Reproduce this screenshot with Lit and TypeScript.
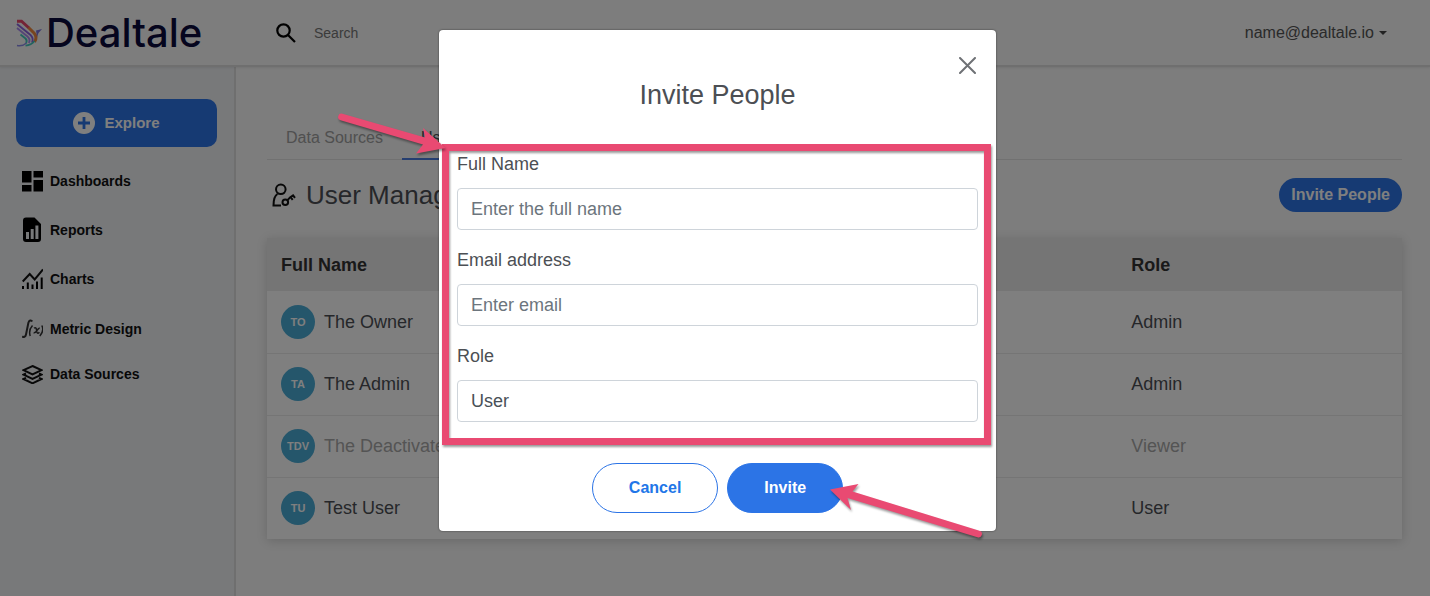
import { LitElement, html, svg, css } from "lit";
import { customElement, property } from "lit/decorators.js";

interface Person {
  initials: string;
  name: string;
  role: string;
  inactive?: boolean;
}

const people: Person[] = [
  { initials: "TO", name: "The Owner", role: "Admin" },
  { initials: "TA", name: "The Admin", role: "Admin" },
  { initials: "TDV", name: "The Deactivated", role: "Viewer", inactive: true },
  { initials: "TU", name: "Test User", role: "User" },
];

const navItems = [
  {
    label: "Dashboards",
    icon: html`<svg width="21" height="28" viewBox="0 0 21 28">
      <path d="M0 4h9.500v11.500H0zM0 18h9.500v6.500H0zM11.500 4H21v6.500h-9.500zM11.500 13H21v11.500h-9.500z" />
    </svg>`,
  },
  {
    label: "Reports",
    icon: html`<svg width="21" height="29" viewBox="0 0 21 29">
      <path d="M4 2.500h8.500l6.500 6.500v15a3 3 0 0 1-3 3H4a3 3 0 0 1-3-3v-18.500a3 3 0 0 1 3-3z" />
      <path class="cut" d="M4 17h3v7H4zM8.700 14h3v10h-3zM13.400 10.500h3V24h-3z" />
    </svg>`,
  },
  {
    label: "Charts",
    icon: html`<svg width="21" height="30" viewBox="0 0 21 30">
      <path class="line" d="M.7 17.500l7-7.500 5 5.500L21 5.500" />
      <path d="M0 22h2v3H0zM4.800 18.500h2V25h-2zM9.500 20.500h2V25h-2zM14 17.500h2V25h-2zM18.700 13.500h2V25h-2z" />
    </svg>`,
  },
  {
    label: "Metric Design",
    icon: html`<svg width="21" height="30" viewBox="0 0 21 30">
      <path class="hair stem" d="M10.200 7.500c-1-1.800-3.200-1.200-3.800 1.300L4 20.500c-.5 2.500-2.500 3.200-3.800 1.800" />
      <path class="hair" d="M10.500 11.500c-2.800 3-3.500 6.500-2.300 10.500M19.800 11.500c1.800 3.300.8 7.200-2 10.500M12 14.200c2.200-1.600 2.400.8 2.700 2.700.3 2.600 1.200 3 2.700 1.400M17.800 14.200c-2.300-.8-3.300 5.600-6.200 4.500" />
    </svg>`,
  },
  {
    label: "Data Sources",
    icon: html`<svg width="21" height="20" viewBox="0 0 21 20">
      <path class="line" d="M10.500 2l9 4.200-9 4.300-9-4.300zM4 9.500l-2.500 1.200 9 4.300 9-4.300L17 9.500M4 13.800L1.500 15l9 4.300 9-4.300-2.500-1.200" />
    </svg>`,
  },
];

@customElement("app-header")
class AppHeader extends LitElement {
  static styles = css`
    :host {
      display: flex;
      align-items: center;
      height: 65px;
      background: #fafafa;
      border-bottom: 2px solid #dedede;
      box-shadow: 0 1px 2px rgba(0, 0, 0, 0.08);
      padding: 0 43px 0 16px;
      position: relative;
    }
    .brand {
      display: flex;
      align-items: center;
      gap: 4px;
      flex: 0 0 260px;
      text-decoration: none;
      color: #0a0a3c;
      font: 500 40px/44px Inter, "Liberation Sans", sans-serif;
    }
    .bird {
      fill: none;
      stroke-width: 1.8;
      flex: none;
    }
    .search {
      display: flex;
      align-items: center;
      gap: 18px;
      flex: 1;
    }
    .search input {
      border: 0;
      padding: 0;
      background: transparent;
      width: 200px;
      font: 14px/20px "Liberation Sans", Arial, sans-serif;
      color: #333;
    }
    .search input::placeholder {
      color: #777;
      opacity: 1;
    }
    .account {
      display: flex;
      align-items: center;
      gap: 5px;
      border: 0;
      padding: 0;
      background: transparent;
      color: #555;
      font: 16px/20px "Liberation Sans", Arial, sans-serif;
    }
  `;

  render() {
    return html`
      <a class="brand" href="#" aria-label="Dealtale">
        <svg class="bird" width="26" height="28" viewBox="0 0 26 28">
          <path stroke="#e8486a" stroke-width="3" d="M1 2.200h4.500L13 9" />
          <path stroke="#f0883e" stroke-width="3" d="M12.500 8.500l5.500 5.500c2.500 2.700 2.500 6 .5 9" />
          <path stroke="#8b62e0" d="M1 5l13.500 11c2.500 2.300 2.800 4.600 1.500 7.500" />
          <path stroke="#a98bf0" d="M1 9l10.500 8.500c2.300 2 2.500 4.200 1.300 6.500" />
          <path stroke="#45c8be" d="M4.500 15.500l5 4c1.500 1.500 1.500 3 .5 4.500M18.500 22c-2 2.500-5 4.200-9 4.700" />
          <path stroke="#8a8ae8" stroke-width="1.500" d="M1 26.500c4 .7 7-.2 9.500-2.500" />
          <path fill="#7a72dc" d="M20 11.500l6-1.500-3.500 4-1.500 4z" />
        </svg>
        Dealtale
      </a>
      <label class="search">
        <svg width="20" height="20" viewBox="0 0 20 20" fill="none" stroke="#000" stroke-width="2.200">
          <circle cx="7.500" cy="7.500" r="6.200" />
          <path d="M12 12l7 7" />
        </svg>
        <input type="search" placeholder="Search" aria-label="Search" />
      </label>
      <button class="account" type="button">
        name@dealtale.io
        <svg width="8" height="4" viewBox="0 0 8 4"><path fill="#444" d="M0 0h8L4 4z" /></svg>
      </button>
    `;
  }
}

@customElement("app-sidebar")
class AppSidebar extends LitElement {
  static styles = css`
    :host {
      display: block;
      box-sizing: border-box;
      flex: 0 0 236px;
      padding: 32px 17px 20px 16px;
      background: #f0f2f5;
      border-right: 2px solid #dedede;
      font: bold 14px/20px "Liberation Sans", Arial, sans-serif;
    }
    .explore {
      display: flex;
      align-items: center;
      justify-content: center;
      gap: 9px;
      width: 100%;
      height: 48px;
      border: 0;
      border-radius: 10px;
      background: #2c74e6;
      color: #fff;
      font: bold 15px/20px "Liberation Sans", Arial, sans-serif;
    }
    .nav {
      display: flex;
      flex-direction: column;
      gap: 20px;
      padding: 20px 6px;
    }
    .item {
      display: flex;
      align-items: center;
      gap: 7px;
      color: #111;
      text-decoration: none;
    }
    .item .line {
      fill: none;
      stroke: #111;
      stroke-width: 2;
    }
    .item .hair {
      fill: none;
      stroke: #333;
      stroke-width: 1.5;
    }
    .item .stem {
      stroke-width: 2;
    }
    .item .cut {
      fill: #f0f2f5;
    }
  `;

  render() {
    return html`
      <button class="explore" type="button">
        <svg width="22" height="22" viewBox="0 0 22 22">
          <circle cx="11" cy="11" r="11" fill="#fff" />
          <path d="M11 5v12M5 11h12" stroke="#2c74e6" stroke-width="2.800" />
        </svg>
        Explore
      </button>
      <nav class="nav">
        ${navItems.map((n) => html`<a class="item" href="#">${n.icon}${n.label}</a>`)}
      </nav>
    `;
  }
}

@customElement("user-table")
class UserTable extends LitElement {
  @property({ attribute: false }) people: Person[] = [];

  static styles = css`
    :host {
      display: block;
      background: #fff;
      box-shadow: 0 2px 10px rgba(0, 0, 0, 0.16);
    }
    .table {
      width: 100%;
      table-layout: fixed;
      border-collapse: collapse;
      font: 18px/24px "Liberation Sans", Arial, sans-serif;
      color: #4c4f54;
    }
    .wide {
      width: 75%;
    }
    th {
      height: 53px;
      box-sizing: border-box;
      padding: 0 13px;
      text-align: left;
      background: #ebebeb;
      color: #333;
    }
    td {
      height: 62px;
      box-sizing: border-box;
      padding: 0 13px;
      border-bottom: 1px solid #ebebeb;
    }
    th:first-child,
    td:first-child {
      padding-left: 14px;
    }
    tr:last-child td {
      border-bottom: 0;
    }
    .person {
      display: flex;
      align-items: center;
      gap: 9px;
    }
    .avatar {
      display: flex;
      align-items: center;
      justify-content: center;
      width: 34px;
      height: 34px;
      border-radius: 50%;
      background: #4bacd6;
      color: #fff;
      font-size: 11px;
      font-weight: bold;
    }
    .inactive {
      color: #a9a9a9;
    }
  `;

  render() {
    return html`
      <table class="table">
        <thead>
          <tr><th class="wide" scope="col">Full Name</th><th scope="col">Role</th></tr>
        </thead>
        <tbody>
          ${this.people.map(
            (p) => html`<tr class=${p.inactive ? "inactive" : ""}>
              <td><div class="person"><span class="avatar">${p.initials}</span>${p.name}</div></td>
              <td>${p.role}</td>
            </tr>`
          )}
        </tbody>
      </table>
    `;
  }
}

@customElement("invite-dialog")
class InviteDialog extends LitElement {
  static styles = css`
    :host {
      display: block;
      position: relative;
      box-sizing: border-box;
      width: 557px;
      max-width: 100%;
      padding: 27px 18px 18px;
      border-radius: 4px;
      background: #fff;
      box-shadow: 0 0 2px rgba(0, 0, 0, 0.6);
      color: #4c4f54;
      font: 18px/24px "Liberation Sans", Arial, sans-serif;
    }
    .top {
      display: flex;
      flex-direction: column;
      gap: 5px;
      margin-bottom: 41px;
    }
    .close {
      align-self: flex-end;
      display: flex;
      margin-right: 2px;
      border: 0;
      padding: 0;
      background: transparent;
    }
    .title {
      margin: 0;
      text-align: center;
      font-size: 27px;
      line-height: 32px;
      font-weight: normal;
    }
    .fields {
      position: relative;
      display: grid;
      gap: 18px;
    }
    .field {
      display: grid;
      gap: 12px;
    }
    .control {
      appearance: none;
      box-sizing: border-box;
      width: 100%;
      height: 42px;
      border: 1px solid #ced4da;
      border-radius: 4px;
      padding: 0 13px;
      background: #fff;
      color: #495057;
      font: inherit;
    }
    .control::placeholder {
      color: #6c757d;
      opacity: 1;
    }
    .marker {
      position: absolute;
      inset: -8px -13px -23px -15px;
      border: 7px solid #e94a72;
      filter: drop-shadow(1px 2px 1px rgba(0, 0, 0, 0.4));
      pointer-events: none;
    }
    .actions {
      display: flex;
      justify-content: center;
      gap: 9px;
      margin-top: 41px;
    }
    .action {
      box-sizing: border-box;
      height: 50px;
      border: 1px solid #2c74e6;
      border-radius: 25px;
      padding: 0 36px;
      background: #fff;
      color: #2176e8;
      font: bold 16px/20px "Liberation Sans", Arial, sans-serif;
    }
    .primary {
      background: #2c74e6;
      color: #fff;
    }
    .arrows {
      position: absolute;
      top: 0;
      left: 0;
      overflow: visible;
      pointer-events: none;
      fill: #e94a72;
      filter: drop-shadow(1px 2px 1px rgba(0, 0, 0, 0.4));
    }
  `;

  render() {
    return html`
      <div class="top">
        <button class="close" type="button" aria-label="Close">
          <svg width="17" height="17" viewBox="0 0 17 17" stroke="#6e7175" stroke-width="2" stroke-linecap="round">
            <path d="M1 1l15 15M16 1L1 16" />
          </svg>
        </button>
        <h2 class="title">Invite People</h2>
      </div>
      <form class="form">
        <div class="fields">
          <div class="field">
            <label for="name">Full Name</label>
            <input class="control" id="name" type="text" placeholder="Enter the full name" />
          </div>
          <div class="field">
            <label for="email">Email address</label>
            <input class="control" id="email" type="email" placeholder="Enter email" />
          </div>
          <div class="field">
            <label for="role">Role</label>
            <select class="control" id="role"><option>User</option></select>
          </div>
          <div class="marker"></div>
        </div>
        <div class="actions">
          <button class="action" type="button">Cancel</button>
          <button class="action primary" type="button">Invite</button>
        </div>
      </form>
      <svg class="arrows" width="1" height="1" viewBox="0 0 1 1">
        ${svg`
          <path d="M-96.500 83.800L-14 107.500L-16 98L6.500 118L-23 123.500L-16 114.500L-98.500 90.200A3.300 3.300 0 0 1 -96.500 83.800Z" />
          <path d="M391 459.500L419.500 454L413.500 461.500L540.500 500.800A3.400 3.400 0 0 1 538.500 507.300L408.500 468L412 480Z" />
        `}
      </svg>
    `;
  }
}

@customElement("app-root")
class AppRoot extends LitElement {
  static styles = css`
    :host {
      display: block;
      position: relative;
      font: 16px/20px "Liberation Sans", Arial, sans-serif;
    }
    .page {
      display: flex;
      flex-direction: column;
      min-height: 100vh;
      background: #fafafa;
    }
    .body {
      display: flex;
      flex: 1;
    }
    .content {
      flex: 1;
      min-width: 0;
      padding: 51px 28px 20px 31px;
    }
    .tabs {
      display: flex;
      border-bottom: 1px solid #e2e2e2;
    }
    .tab {
      padding: 10px 19px;
      border-bottom: 2px solid transparent;
      margin-bottom: -1px;
      color: #a0a0a0;
      text-decoration: none;
    }
    .current {
      color: #4c4f54;
      border-bottom-color: #4a7de0;
    }
    .heading {
      display: flex;
      align-items: center;
      gap: 10px;
      margin: 18px 0 26px;
      padding-left: 5px;
    }
    .title {
      flex: 1;
      margin: 0;
      font-size: 26px;
      line-height: 32px;
      font-weight: normal;
      color: #4c4f54;
    }
    .invite {
      height: 34px;
      border: 0;
      border-radius: 17px;
      padding: 0 12px;
      background: #2c74e6;
      color: #fff;
      font: bold 16px/20px "Liberation Sans", Arial, sans-serif;
    }
    .backdrop {
      position: absolute;
      inset: 0;
      display: flex;
      justify-content: center;
      align-items: flex-start;
      padding: 30px 0 0 5px;
      background: rgba(0, 0, 0, 0.5);
    }
  `;

  render() {
    return html`
      <div class="page">
        <app-header></app-header>
        <div class="body">
          <app-sidebar></app-sidebar>
          <main class="content">
            <nav class="tabs">
              <a class="tab" href="#">Data Sources</a>
              <a class="tab current" href="#">Users</a>
            </nav>
            <div class="heading">
              <svg width="24" height="24" viewBox="0 0 24 24" fill="none" stroke="#111" stroke-width="2">
                <circle cx="8.800" cy="6.300" r="4.800" />
                <path d="M5.500 11c-3 1.700-4 4.500-4 11.500H9" />
                <circle cx="13.300" cy="19.300" r="2.800" />
                <path d="M15.300 17.300c2-2.500 3.500-4 5.700-5l2 2.500M18.500 14l2.200 2.800" />
              </svg>
              <h1 class="title">User Management</h1>
              <button class="invite" type="button">Invite People</button>
            </div>
            <user-table .people=${people}></user-table>
          </main>
        </div>
      </div>
      <div class="backdrop">
        <invite-dialog role="dialog" aria-modal="true" aria-label="Invite People"></invite-dialog>
      </div>
    `;
  }
}
